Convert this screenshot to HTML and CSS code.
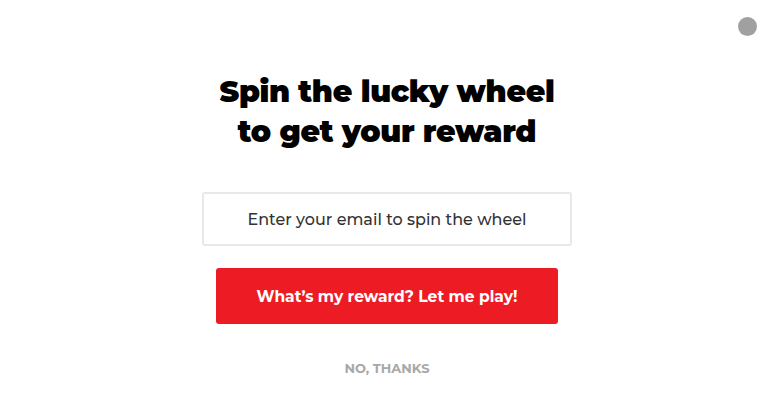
FILE: index.html
```html
<!DOCTYPE html>
<html lang="en">
  <head>
    <meta charset="UTF-8" />
    <meta name="viewport" content="width=device-width, initial-scale=1.0" />
    <title>Spin the lucky wheel</title>
    <link rel="stylesheet" href="styles.css">
  </head>
  <body>
    <div class="popup">
      <span class="close"></span>
      <h1 class="title">Spin the lucky wheel<br />to get your reward</h1>
      <input type="email" class="email-box" placeholder="Enter your email to spin the wheel" />
      <button class="play-btn">What’s my reward? Let me play!</button>
      <a href="#" class="no-thanks">NO, THANKS</a>
    </div>
  </body>
</html>
```

FILE: styles.css
```css
body {
  margin: 0;
  background: #fff;
  font-family: "Montserrat", Inter, "Noto Sans", sans-serif;
}

.popup {
  position: relative;
  display: flex;
  flex-direction: column;
  align-items: center;
  height: 403px;
  padding-top: 72px;
  box-sizing: border-box;
}

.close {
  position: absolute;
  top: 17px;
  left: 738px;
  width: 19px;
  height: 19px;
  border-radius: 50%;
  background: #a0a0a0;
  cursor: pointer;
}

.title {
  margin: 0;
  font-size: 30px;
  line-height: 40px;
  font-weight: 900;
  text-align: center;
  color: #000;
  letter-spacing: -0.35px;
}

.email-box {
  margin-top: 40px;
  width: 370px;
  height: 54px;
  border: 2px solid #e8e8e8;
  border-radius: 3px;
  box-sizing: border-box;
  font-family: inherit;
  font-size: 16px;
  font-weight: 500;
  text-align: center;
  outline: none;
}

.email-box::placeholder {
  color: #333;
  opacity: 1;
}

.play-btn {
  margin-top: 22px;
  width: 342px;
  height: 56px;
  border: none;
  border-radius: 3px;
  background: #ed1c24;
  color: #fff;
  font-family: inherit;
  font-size: 15.5px;
  font-weight: 700;
  cursor: pointer;
}

.no-thanks {
  margin-top: 36px;
  font-size: 13px;
  font-weight: 700;
  color: #a8a8a8;
  text-decoration: none;
}
```
